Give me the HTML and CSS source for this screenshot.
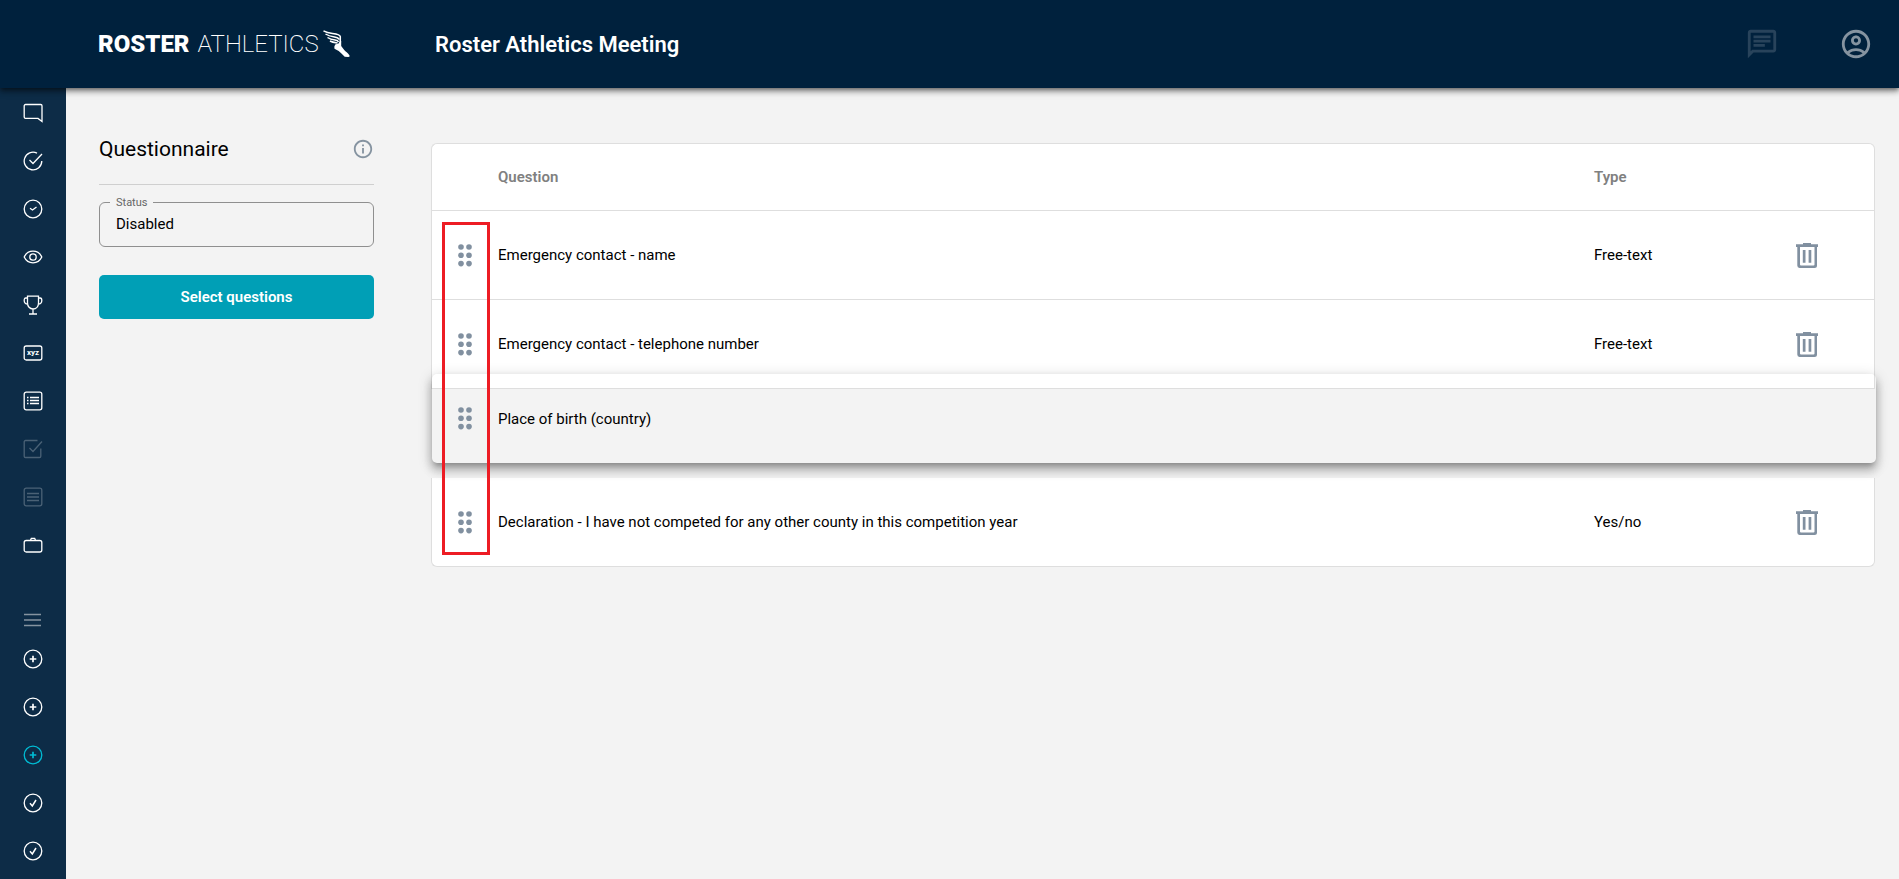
FILE: index.html
```html
<!DOCTYPE html>
<html lang="en">
<head>
    <meta charset="UTF-8">
    <meta name="viewport" content="width=device-width, initial-scale=1.0">
    <title>Questionnaire - Roster Athletics</title>
    <link rel="stylesheet" href="styles.css">
</head>
<body>
    <!-- Shared icons -->
    <svg class="sprite" aria-hidden="true">
        <symbol id="icon-dots" viewBox="0 0 14 23">
            <circle cx="3" cy="3" r="2.8"/><circle cx="11" cy="3" r="2.8"/>
            <circle cx="3" cy="11.3" r="2.8"/><circle cx="11" cy="11.3" r="2.8"/>
            <circle cx="3" cy="19.6" r="2.8"/><circle cx="11" cy="19.6" r="2.8"/>
        </symbol>
        <symbol id="icon-trash" viewBox="0 0 22 25">
            <path d="M0 1.3h7V0h8v1.3h7V4h-1v18.5a2.5 2.5 0 0 1-2.5 2.5h-15A2.5 2.5 0 0 1 1.3 22.5V4H0zM4 4v17.5a1 1 0 0 0 1 1h12.5a1 1 0 0 0 1-1V4zM6.8 7h2.7v12.7H6.8zM12.6 7h2.7v12.7h-2.7z" fill-rule="evenodd"/>
        </symbol>
        <symbol id="icon-plus" viewBox="0 0 20 20">
            <circle cx="10" cy="10" r="8.8"/><path d="M10 6.7v6.6M6.7 10h6.6" stroke-width="1.7"/>
        </symbol>
        <symbol id="icon-tick" viewBox="0 0 20 20">
            <circle cx="10" cy="10" r="8.8"/><path d="M7 10.3l2.3 2.7L13 7" stroke-width="1.5"/>
        </symbol>
    </svg>

    <header class="topbar">
        <a class="logo" href="#" aria-label="Roster Athletics">
            <span class="logo-bold">ROSTER</span>
            <span class="logo-light">ATHLETICS</span>
            <svg class="logo-foot" viewBox="0 0 28 28" fill="#fff">
                <path d="M12.200 14.500l3.300-1 1.500-2.500h1.200v5l3 4c1.500 1.500 3.500 3 5 5 .8 1.300.5 2-1 2l-3.500-.3c-2-1.700-4-4-6-5.700l-4.200-2.300-.2-2z"/>
                <path d="M.5.800c3 1.600 6 2.200 9 2.600 4 .5 7.500 1 7.800 3.200v6M2.500 4c3 2 6 2.500 9 3 2.500.4 4 1 4.500 2.500M4.500 7.500c2.500 1.700 5 2.200 7.500 2.500 2 .3 3 .8 3.500 2M7 11c2 1.200 4 1.500 7.500 2" fill="none" stroke="#fff" stroke-width="1.500"/>
            </svg>
        </a>
        <h1 class="meeting-title">Roster Athletics Meeting</h1>
        <div class="topbar-actions">
            <button type="button" class="icon-btn dim" aria-label="Messages">
                <svg width="34" height="34" viewBox="0 0 24 24"><path d="M4 4h16v12H5.170L4 17.170V4m0-2c-1.100 0-1.990.9-1.990 2L2 22l4-4h14c1.100 0 2-.9 2-2V4c0-1.100-.9-2-2-2H4zm2 10h8v2H6v-2zm0-3h12v2H6V9zm0-3h12v2H6V6z"/></svg>
            </button>
            <button type="button" class="icon-btn" aria-label="Account">
                <svg width="34" height="34" viewBox="0 0 24 24"><path d="M12 2C6.480 2 2 6.480 2 12s4.480 10 10 10 10-4.480 10-10S17.520 2 12 2zM7.350 18.500C8.660 17.560 10.260 17 12 17s3.340.56 4.650 1.500C15.340 19.440 13.740 20 12 20s-3.340-.56-4.650-1.500zm10.790-1.380C16.450 15.800 14.320 15 12 15s-4.450.8-6.140 2.120C4.700 15.730 4 13.950 4 12c0-4.420 3.580-8 8-8s8 3.580 8 8c0 1.950-.7 3.730-1.860 5.120zM12 6c-1.930 0-3.500 1.570-3.500 3.500S10.070 13 12 13s3.500-1.570 3.500-3.500S13.930 6 12 6zm0 5c-.83 0-1.500-.67-1.500-1.500S11.170 8 12 8s1.500.67 1.500 1.500S12.830 11 12 11z"/></svg>
            </button>
        </div>
    </header>

    <div class="layout">
        <nav class="sidebar" aria-label="Meeting steps">
            <a href="#" aria-label="Messages"><svg viewBox="0 0 20 20"><path d="M2.500 1.500h15.200a1.300 1.300 0 0 1 1.300 1.300V18.400l-4-3H2.500a1.300 1.300 0 0 1-1.300-1.300V2.800a1.300 1.300 0 0 1 1.300-1.300z"/></svg></a>
            <a href="#" aria-label="Confirmation"><svg viewBox="0 0 20 20"><path d="M14 2.200A8.800 8.800 0 1 0 18.800 10M6.500 9l3.500 3.500L19 3"/></svg></a>
            <a href="#" aria-label="Schedule"><svg viewBox="0 0 20 20"><circle cx="10" cy="10" r="8.800"/><path d="M7 9.300l2.500 1.700 4-3"/></svg></a>
            <a href="#" aria-label="Visibility"><svg viewBox="0 0 20 20"><path d="M1.200 10C3 6.200 6.200 4.200 10 4.200S17 6.200 18.800 10C17 13.800 13.800 15.800 10 15.800S3 13.800 1.200 10z"/><circle cx="10" cy="10" r="3.200"/></svg></a>
            <a href="#" aria-label="Competitions"><svg viewBox="0 0 20 20"><path d="M4.500 1.200h11V8c0 3.500-2.300 6-5.500 6S4.500 11.500 4.500 8zM4.500 3H2.800C1.500 3 1.200 4 1.200 5.500S2 9 4.800 9M15.500 3h1.700c1.300 0 1.600 1 1.600 2.500S18 9 15.200 9M10 14v5M6 19h8"/></svg></a>
            <a href="#" aria-label="Fields"><svg viewBox="0 0 20 20"><rect x="1.200" y="3" width="17.600" height="14" rx="2"/><text class="icon-text" x="10" y="12" text-anchor="middle">xyz</text></svg></a>
            <a href="#" aria-label="Questionnaire"><svg viewBox="0 0 20 20"><rect x="1.200" y="1.200" width="17.600" height="17.600" rx="2"/><path d="M4 6.500h1.500M4 9.500h1.500M4 12.500h1.500M7 6.500h9M7 9.500h9M7 12.500h9"/></svg></a>
            <a href="#" class="faded" aria-label="Approvals"><svg viewBox="0 0 20 20"><path d="M14.500 1.500H2.500a1.300 1.300 0 0 0-1.300 1.300v14.400a1.300 1.300 0 0 0 1.300 1.300h14a1.300 1.300 0 0 0 1.300-1.300V9.500M6.500 9l3.500 3.500L19 2.500"/></svg></a>
            <a href="#" class="faded" aria-label="Reports"><svg viewBox="0 0 20 20"><rect x="1.200" y="1.200" width="17.600" height="17.600" rx="2"/><path d="M4 6.500h12M4 10h12M4 13.500h12"/></svg></a>
            <a href="#" aria-label="Organisation"><svg viewBox="0 0 20 20"><rect x="1.200" y="5.500" width="17.600" height="11.500" rx="2"/><path d="M7.500 5.500l.8-2.200h3.400l.8 2.200"/></svg></a>
            <a href="#" class="menu-link" aria-label="Menu"><svg viewBox="0 0 20 20"><path d="M1 4.500h17M1 10h17M1 15.500h17"/></svg></a>
            <a href="#" aria-label="Add events"><svg><use href="#icon-plus"/></svg></a>
            <a href="#" aria-label="Add entries"><svg><use href="#icon-plus"/></svg></a>
            <a href="#" class="active" aria-label="Add questionnaire"><svg><use href="#icon-plus"/></svg></a>
            <a href="#" aria-label="Check entries"><svg><use href="#icon-tick"/></svg></a>
            <a href="#" aria-label="Check results"><svg><use href="#icon-tick"/></svg></a>
        </nav>

        <main class="content">
            <section class="panel">
                <div class="panel-head">
                    <h2>Questionnaire</h2>
                    <button type="button" class="icon-btn info" aria-label="Information">
                        <svg width="22" height="22" viewBox="0 0 24 24"><path d="M11 7h2v2h-2zm0 4h2v6h-2zm1-9C6.480 2 2 6.480 2 12s4.480 10 10 10 10-4.480 10-10S17.520 2 12 2zm0 18c-4.410 0-8-3.590-8-8s3.590-8 8-8 8 3.590 8 8-3.590 8-8 8z"/></svg>
                    </button>
                </div>
                <div class="field">
                    <label for="status">Status</label>
                    <select id="status">
                        <option selected>Disabled</option>
                        <option>Enabled</option>
                    </select>
                </div>
                <button type="button" class="select-btn">Select questions</button>
            </section>

            <section class="questions">
                <table>
                    <thead>
                        <tr>
                            <th class="col-handle"></th>
                            <th>Question</th>
                            <th class="col-type">Type</th>
                            <th class="col-delete"></th>
                        </tr>
                    </thead>
                    <tbody>
                        <tr>
                            <td class="col-handle"><button type="button" class="handle" aria-label="Move"><svg><use href="#icon-dots"/></svg></button></td>
                            <td>Emergency contact - name</td>
                            <td>Free-text</td>
                            <td class="col-delete"><button type="button" class="trash" aria-label="Delete"><svg><use href="#icon-trash"/></svg></button></td>
                        </tr>
                        <tr>
                            <td class="col-handle"><button type="button" class="handle" aria-label="Move"><svg><use href="#icon-dots"/></svg></button></td>
                            <td>Emergency contact - telephone number</td>
                            <td>Free-text</td>
                            <td class="col-delete"><button type="button" class="trash" aria-label="Delete"><svg><use href="#icon-trash"/></svg></button></td>
                        </tr>
                        <!-- Empty slot left by the row being dragged -->
                        <tr class="slot">
                            <td colspan="4"></td>
                        </tr>
                        <tr>
                            <td class="col-handle"><button type="button" class="handle" aria-label="Move"><svg><use href="#icon-dots"/></svg></button></td>
                            <td>Declaration - I have not competed for any other county in this competition year</td>
                            <td>Yes/no</td>
                            <td class="col-delete"><button type="button" class="trash" aria-label="Delete"><svg><use href="#icon-trash"/></svg></button></td>
                        </tr>
                    </tbody>
                </table>

                <div class="drag-preview">
                    <button type="button" class="handle" aria-label="Move"><svg><use href="#icon-dots"/></svg></button>
                    <span>Place of birth (country)</span>
                </div>
                <div class="highlight"></div>
            </section>
        </main>
    </div>
</body>
</html>
```
FILE: styles.css
```css
* {
    box-sizing: border-box;
}

body {
    margin: 0;
    min-height: 100vh;
    display: flex;
    flex-direction: column;
    font-family: Roboto, sans-serif;
    font-size: 15px;
    color: #000;
    background-color: #f3f3f3;
}

button {
    font-family: inherit;
    border: none;
    background: none;
    padding: 0;
    cursor: pointer;
}

svg {
    display: block;
}

.sprite {
    position: absolute;
    width: 0;
    height: 0;
}

/* Top bar */
.topbar {
    position: relative;
    z-index: 2;
    height: 88px;
    padding: 0 26px 0 98px;
    display: flex;
    align-items: center;
    background-color: #00213d;
    color: #fff;
    box-shadow: 0 2px 4px -1px rgba(0, 0, 0, 0.4), 0 4px 5px 0 rgba(0, 0, 0, 0.24), 0 1px 10px 0 rgba(0, 0, 0, 0.22);
}

.logo {
    width: 337px;
    display: flex;
    align-items: center;
    color: #fff;
    font-size: 24px;
    line-height: 28px;
    text-decoration: none;
}

.logo-bold {
    font-weight: 900;
    margin-right: 8px;
}

.logo-light {
    font-weight: 200;
}

.logo-foot {
    width: 28px;
    height: 28px;
    margin-left: 4px;
}

.meeting-title {
    margin: 0;
    font-size: 22px;
    font-weight: 600;
}

.topbar-actions {
    margin-left: auto;
    display: flex;
    gap: 60px;
}

.icon-btn svg {
    fill: #8593a0;
}

.icon-btn.dim {
    opacity: 0.3;
}

/* Sidebar */
.layout {
    flex: 1;
    display: flex;
}

.sidebar {
    flex: none;
    width: 66px;
    padding-top: 1px;
    background-color: #0d2c47;
}

.sidebar a {
    height: 48px;
    display: flex;
    align-items: center;
    justify-content: center;
    color: #fff;
}

.sidebar svg {
    width: 20px;
    height: 20px;
    fill: none;
    stroke: currentColor;
    stroke-width: 1.3;
}

.sidebar .icon-text {
    fill: currentColor;
    stroke: none;
    font-size: 8px;
    font-weight: 700;
}

.sidebar .faded {
    opacity: 0.25;
}

.sidebar .active {
    color: #00bcd4;
}

.sidebar .menu-link {
    height: 30px;
    margin-top: 36px;
    color: #8593a0;
}

/* Content */
.content {
    flex: 1;
    display: flex;
    align-items: flex-start;
    gap: 57px;
    padding: 55px 24px 0 33px;
}

.panel {
    flex: none;
    width: 275px;
}

.panel-head {
    height: 42px;
    padding: 0 0 29px;
    display: flex;
    align-items: center;
    justify-content: space-between;
    border-bottom: 1px solid #cfcfcf;
}

.panel-head h2 {
    margin: 0;
    font-size: 21px;
    line-height: 24px;
    font-weight: 400;
}

.field {
    position: relative;
    margin-top: 17px;
}

.field label {
    position: absolute;
    top: -6px;
    left: 11px;
    padding: 0 6px;
    font-size: 11px;
    line-height: 14px;
    color: #666;
    background-color: #f3f3f3;
}

.field select {
    width: 100%;
    height: 45px;
    padding: 0 16px 2px;
    appearance: none;
    font-family: inherit;
    font-size: 15px;
    color: #000;
    border: 1px solid #8f8f8f;
    border-radius: 6px;
    background: none;
}

.select-btn {
    width: 100%;
    height: 44px;
    margin-top: 28px;
    font-size: 15px;
    font-weight: 600;
    color: #fff;
    background-color: #009fb6;
    border-radius: 5px;
}

/* Questions table */
.questions {
    position: relative;
    flex: 1;
}

.questions table {
    width: 100%;
    table-layout: fixed;
    border-collapse: separate;
    border-spacing: 0;
}

.questions th,
.questions td {
    padding: 0;
    text-align: left;
    background-color: #fff;
    border-bottom: 1px solid #dedede;
}

.questions th {
    height: 68px;
    font-weight: 600;
    color: #808080;
    border-top: 1px solid #dedede;
}

.questions td {
    height: 89px;
}

.questions th:first-child,
.questions td:first-child {
    border-left: 1px solid #dedede;
}

.questions th:last-child,
.questions td:last-child {
    border-right: 1px solid #dedede;
}

.questions th:first-child {
    border-top-left-radius: 6px;
}

.questions th:last-child {
    border-top-right-radius: 6px;
}

.questions tr:last-child td:first-child {
    border-bottom-left-radius: 6px;
}

.questions tr:last-child td:last-child {
    border-bottom-right-radius: 6px;
}

.col-handle {
    width: 67px;
}

.col-type {
    width: 146px;
}

.col-delete {
    width: 135px;
}

.questions .slot td {
    background: none;
    border-color: transparent;
}

.handle,
.trash {
    display: block;
    margin: 0 auto;
    fill: #8190a0;
}

.handle svg {
    width: 14px;
    height: 23px;
}

.trash svg {
    width: 22px;
    height: 25px;
}

/* Row in the air while it is dragged */
.drag-preview {
    position: absolute;
    top: 231px;
    left: 1px;
    right: -1px;
    height: 89px;
    display: flex;
    align-items: center;
    border-radius: 5px;
    box-shadow: 0 5px 5px -3px rgba(0, 0, 0, 0.2), 0 8px 10px 1px rgba(0, 0, 0, 0.14), 0 3px 14px 2px rgba(0, 0, 0, 0.12), 0 4px 10px rgba(0, 0, 0, 0.12);
}

.drag-preview .handle {
    width: 66px;
    margin: 0;
}

.drag-preview .handle svg {
    margin: 0 auto;
}

.highlight {
    position: absolute;
    top: 79px;
    left: 11px;
    width: 48px;
    height: 333px;
    border: 3px solid #ed1c24;
    pointer-events: none;
}
```
